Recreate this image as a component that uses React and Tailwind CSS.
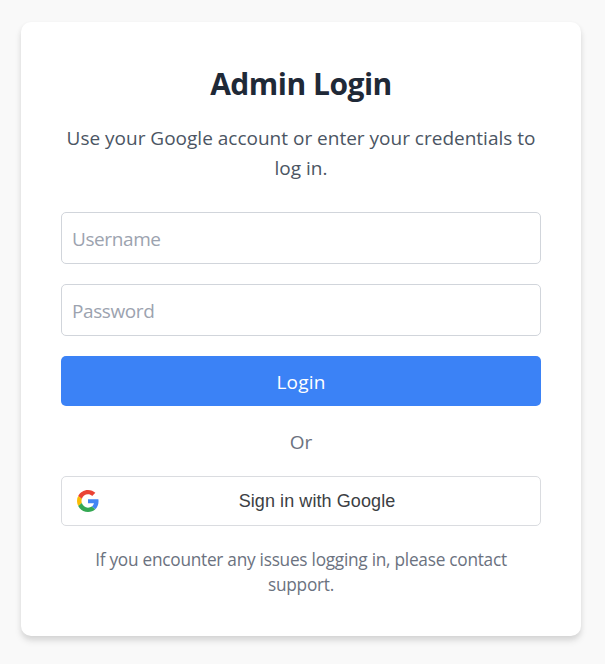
function GoogleMark() {
  return (
    <svg viewBox="0 0 48 48" className="h-[22px] w-[22px] shrink-0">
      <path fill="#EA4335" d="M24 9.5c3.54 0 6.71 1.22 9.21 3.6l6.85-6.85C35.9 2.38 30.47 0 24 0 14.62 0 6.51 5.38 2.56 13.22l7.98 6.19C12.43 13.72 17.74 9.5 24 9.5z" />
      <path fill="#4285F4" d="M46.98 24.55c0-1.57-.15-3.09-.38-4.55H24v9.02h12.94c-.58 2.96-2.26 5.48-4.78 7.18l7.73 6c4.51-4.18 7.09-10.36 7.09-17.65z" />
      <path fill="#FBBC05" d="M10.53 28.59c-.48-1.45-.76-2.99-.76-4.59s.27-3.14.76-4.59l-7.98-6.19C.92 16.46 0 20.12 0 24c0 3.88.92 7.54 2.56 10.78l7.97-6.19z" />
      <path fill="#34A853" d="M24 48c6.48 0 11.93-2.13 15.89-5.81l-7.73-6c-2.15 1.45-4.92 2.3-8.16 2.3-6.26 0-11.57-4.22-13.47-9.91l-7.98 6.19C6.51 42.62 14.62 48 24 48z" />
    </svg>
  );
}

export default function App() {
  return (
    <main className="h-screen overflow-hidden bg-[#f9f9f9] pl-[21px] pt-[22px] font-['Open_Sans','Noto_Sans',sans-serif]">
      <section className="h-[614px] w-[560px] rounded-[10px] bg-white px-10 pt-10 text-center shadow-[0_5px_7.5px_rgba(0,0,0,0.1),0_2.5px_5px_rgba(0,0,0,0.06)]">
        <h1 className="h-[44px] whitespace-nowrap text-[30px] font-bold leading-[44px] tracking-[-0.5px] text-[#1f2937]">
          Admin Login
        </h1>
        <p className="mt-[17px] whitespace-nowrap text-[19px] leading-[30px] text-[#4b5563]">
          Use your Google account or enter your credentials to<br />log in.
        </p>
        <form className="mt-[29px]" onSubmit={(e) => e.preventDefault()}>
          <input placeholder="Username" className="block h-[52px] w-full rounded-[5px] border border-[#d1d5db] px-[10px] pt-[2px] text-[19px] tracking-[-0.4px] placeholder:text-[#9ca3af]" />
          <input type="password" placeholder="Password" className="mt-5 block h-[52px] w-full rounded-[5px] border border-[#d1d5db] px-[10px] pt-[2px] text-[19px] tracking-[-0.4px] placeholder:text-[#9ca3af]" />
          <button className="mt-5 block h-[50px] w-full rounded-[5px] bg-[#3b82f6] pt-[2px] text-[19px] tracking-[0.2px] text-white">Login</button>
        </form>
        <div className="mt-[21px] h-[30px] text-[19px] leading-[30px] text-[#6b7280]">Or</div>
        <button className="mt-[19px] flex h-[50px] w-full items-center rounded-[5px] border border-[#dadce0] px-[15px] font-['Liberation_Sans',sans-serif] text-[18px] tracking-[0.08px] text-[#3c4043]">
          <GoogleMark />
          <span className="ml-[10px] grow text-center">Sign in with Google</span>
        </button>
        <p className="mt-[21px] whitespace-nowrap text-[17.25px] leading-[25px] tracking-[-0.26px] text-[#6b7280]">
          If you encounter any issues logging in, please contact<br />support.
        </p>
      </section>
    </main>
  );
}
